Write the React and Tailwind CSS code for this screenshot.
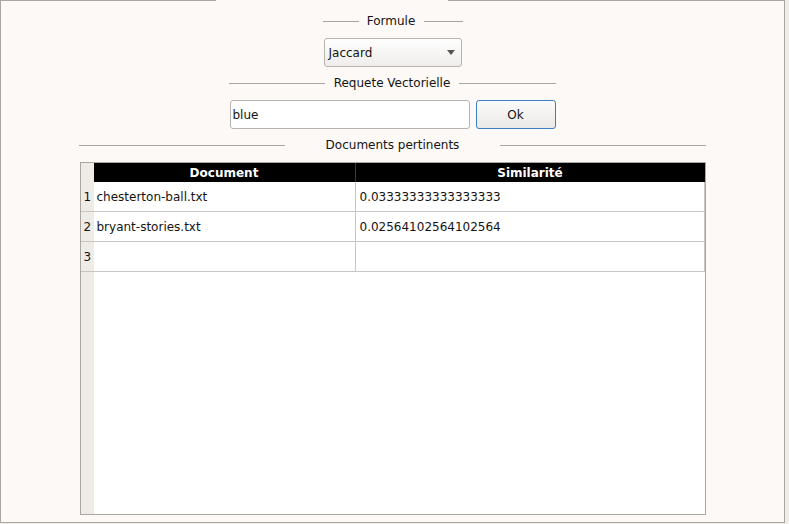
export default function App() {
  const font = { fontFamily: '"DejaVu Sans", "Liberation Sans", sans-serif' };
  const rows = [
    ["1", "chesterton-ball.txt", "0.03333333333333333"],
    ["2", "bryant-stories.txt", "0.02564102564102564"],
    ["3", "", ""],
  ];
  return (
    <div className="w-[789px] h-[524px] bg-[#efebe7] text-[12px] text-[#141414] overflow-hidden" style={font}>
      <div className="w-[785px] h-[523px] bg-[#fdf9f6] border-l border-r border-b border-[#aaa6a2] flex flex-col items-center">
        {/* top border with tab gap */}
        <div className="w-full h-px flex">
          <div className="w-[215px] h-px bg-[#aaa6a2]"></div>
          <div className="w-[232px] h-px"></div>
          <div className="flex-1 h-px bg-[#aaa6a2]"></div>
        </div>

        {/* Formule */}
        <div className="mt-[12px] h-[16px] w-[140px] flex items-center justify-between">
          <div className="w-[36px] h-px bg-[#a9a5a1]"></div>
          <span className="leading-[16px]">Formule</span>
          <div className="w-[39px] h-px bg-[#a9a5a1]"></div>
        </div>

        <div className="mt-[9px] w-[138px] h-[29px] rounded-[3px] border border-[#b7b3af] bg-gradient-to-b from-[#ffffff] to-[#efedeb] flex items-center pl-[4px] pr-[6px]">
          <span className="flex-1 leading-[16px]">Jaccard</span>
          <svg width="8" height="5" viewBox="0 0 8 5"><path d="M0 0 L8 0 L4 5 Z" fill="#555" /></svg>
        </div>

        {/* Requete Vectorielle */}
        <div className="mt-[8px] h-[16px] w-[327px] flex items-center justify-between">
          <div className="w-[96px] h-px bg-[#a9a5a1]"></div>
          <span className="leading-[16px]">Requete Vectorielle</span>
          <div className="w-[97px] h-px bg-[#a9a5a1]"></div>
        </div>

        <div className="mt-[9px] flex">
          <div className="w-[240px] h-[29px] rounded-[3px] border border-[#b7b3af] bg-white flex items-center pl-[2px]">
            <span className="leading-[16px]">blue</span>
          </div>
          <div className="ml-[6px] w-[80px] h-[29px] rounded-[3px] border border-[#3a7fc0] bg-gradient-to-b from-[#fcfbfa] to-[#ebe9e7] flex items-center justify-center">
            <span className="leading-[16px]">Ok</span>
          </div>
        </div>

        {/* Documents pertinents */}
        <div className="mt-[8px] h-[16px] w-[627px] flex items-center justify-between">
          <div className="w-[206px] h-px bg-[#a9a5a1]"></div>
          <span className="leading-[16px]">Documents pertinents</span>
          <div className="w-[206px] h-px bg-[#a9a5a1]"></div>
        </div>

        {/* Table */}
        <div className="mt-[9px] w-[626px] h-[353px] border border-[#aaa6a2] bg-white flex flex-col">
          <div className="flex h-[19px]">
            <div className="w-[13px] bg-[#efebe7]"></div>
            <div className="w-[262px] bg-black text-white font-bold flex items-center justify-center border-r border-[#3a3a3a]">Document</div>
            <div className="w-[349px] bg-black text-white font-bold flex items-center justify-center">Similarité</div>
          </div>
          {rows.map((r) => (
            <div key={r[0]} className="flex h-[30px]">
              <div className="w-[13px] bg-[#efebe7] border-b border-[#c9c5c1] flex items-center pl-[3px]">{r[0]}</div>
              <div className="w-[262px] border-b border-r border-[#c9c5c1] flex items-center pl-[3px]">{r[1]}</div>
              <div className="w-[349px] border-b border-r border-[#c9c5c1] flex items-center pl-[4px]">{r[2]}</div>
            </div>
          ))}
          <div className="flex flex-1">
            <div className="w-[13px] bg-[#efebe7]"></div>
            <div className="flex-1"></div>
          </div>
        </div>
      </div>
    </div>
  );
}
